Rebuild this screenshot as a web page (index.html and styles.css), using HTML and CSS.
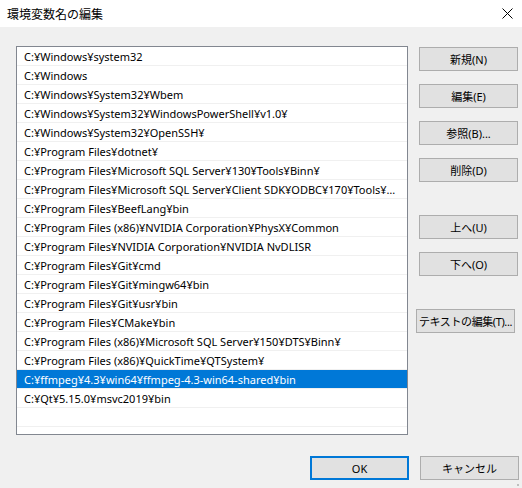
FILE: index.html
```html
<!DOCTYPE html>
<html lang="ja">
<head>
  <meta charset="UTF-8" />
  <title>環境変数名の編集</title>
  <link rel="stylesheet" href="styles.css">
</head>
<body>

  <div class="dialog">
    <div class="titlebar">
      <span class="title">環境変数名の編集</span>
      <svg class="close" width="11" height="11" viewBox="0 0 11 11">
        <path d="M0.5 0.5 L10.5 10.5 M10.5 0.5 L0.5 10.5" stroke="#000" stroke-width="1" fill="none" />
      </svg>
    </div>

    <div class="content">
      <ul class="pathlist" id="pathList"></ul>

      <div class="actions">
        <button>新規(N)</button>
        <button>編集(E)</button>
        <button>参照(B)...</button>
        <button>削除(D)</button>
        <button class="group">上へ(U)</button>
        <button>下へ(O)</button>
        <button class="group wide">テキストの編集(T)...</button>
      </div>
    </div>

    <div class="footer">
      <button class="default">OK</button>
      <button>キャンセル</button>
    </div>

    <svg class="grip" width="4" height="4" viewBox="0 0 4 4">
      <rect x="1" y="1" width="2" height="2" fill="#bfbfbf" />
    </svg>
  </div>

  <script>
    const paths = [
      'C:¥Windows¥system32',
      'C:¥Windows',
      'C:¥Windows¥System32¥Wbem',
      'C:¥Windows¥System32¥WindowsPowerShell¥v1.0¥',
      'C:¥Windows¥System32¥OpenSSH¥',
      'C:¥Program Files¥dotnet¥',
      'C:¥Program Files¥Microsoft SQL Server¥130¥Tools¥Binn¥',
      'C:¥Program Files¥Microsoft SQL Server¥Client SDK¥ODBC¥170¥Tools¥Binn¥',
      'C:¥Program Files¥BeefLang¥bin',
      'C:¥Program Files (x86)¥NVIDIA Corporation¥PhysX¥Common',
      'C:¥Program Files¥NVIDIA Corporation¥NVIDIA NvDLISR',
      'C:¥Program Files¥Git¥cmd',
      'C:¥Program Files¥Git¥mingw64¥bin',
      'C:¥Program Files¥Git¥usr¥bin',
      'C:¥Program Files¥CMake¥bin',
      'C:¥Program Files (x86)¥Microsoft SQL Server¥150¥DTS¥Binn¥',
      'C:¥Program Files (x86)¥QuickTime¥QTSystem¥',
      'C:¥ffmpeg¥4.3¥win64¥ffmpeg-4.3-win64-shared¥bin',
      'C:¥Qt¥5.15.0¥msvc2019¥bin',
      '',
      ''
    ];
    const selected = 17;

    const list = document.getElementById('pathList');
    paths.forEach((p, i) => {
      const li = document.createElement('li');
      li.textContent = p;
      if (i === selected) li.className = 'selected';
      list.appendChild(li);
    });
  </script>

</body>
</html>
```

FILE: styles.css
```css
body {
  margin: 0;
  padding: 0;
  font-family: 'Noto Sans', 'Noto Sans CJK JP', sans-serif;
  font-size: 11px;
  color: #000;
}
.dialog {
  position: relative;
  width: 522px;
  height: 488px;
  background: #f0f0f0;
  overflow: hidden;
}
.titlebar {
  height: 27px;
  background: #fff;
  display: flex;
  align-items: center;
  justify-content: space-between;
  padding: 0 9px 0 7px;
}
.title {
  font-family: 'Noto Sans CJK JP', sans-serif;
  font-size: 12px;
}
.content {
  display: flex;
  gap: 11px;
  padding: 19px 0 0 16px;
}
.pathlist {
  list-style: none;
  margin: 0;
  padding: 0;
  width: 390px;
  height: 387px;
  border: 1px solid #828790;
  background: #fff;
  overflow: hidden;
}
.pathlist li {
  height: 17px;
  line-height: 17px;
  padding: 1px 8px 0 7px;
  border-bottom: 1px solid #f0f0f0;
  white-space: nowrap;
  overflow: hidden;
  text-overflow: ellipsis;
}
.pathlist li.selected {
  background: #0078d7;
  color: #fff;
}
.actions {
  display: flex;
  flex-direction: column;
  align-items: flex-start;
  padding-top: 1px;
}
button {
  width: 99px;
  height: 24px;
  margin: 0;
  padding: 0;
  background: #e1e1e1;
  border: 1px solid #adadad;
  font-family: 'Noto Sans', 'Noto Sans CJK JP', sans-serif;
  font-size: 11px;
  color: #000;
  white-space: nowrap;
}
.actions button + button {
  margin-top: 13px;
}
.actions button.group {
  margin-top: 33px;
}
.actions button.wide {
  margin-left: -3px;
  letter-spacing: -0.4px;
}
.footer {
  display: flex;
  justify-content: flex-end;
  gap: 11px;
  padding: 21px 3px 0 0;
}
.footer button.default {
  border: 2px solid #0078d7;
}
.grip {
  position: absolute;
  right: 2px;
  bottom: 1px;
}
```
